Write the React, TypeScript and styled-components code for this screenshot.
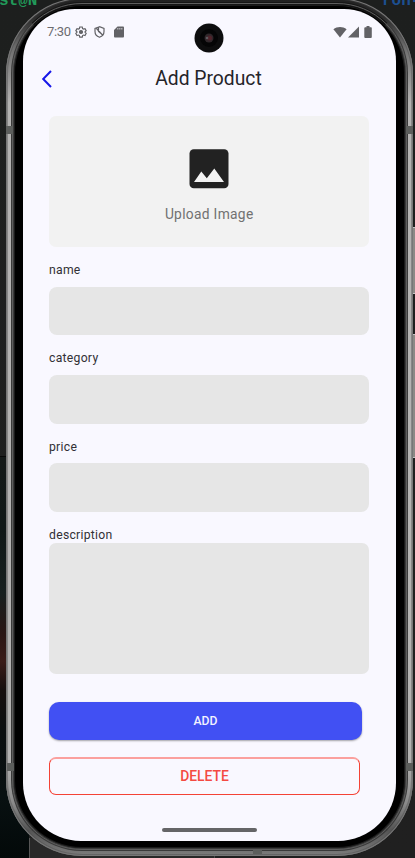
import React from 'react';
import styled, { createGlobalStyle } from 'styled-components';

const GlobalStyle = createGlobalStyle`
  *, *::before, *::after { box-sizing: border-box; }
  body { margin: 0; background: #1d1f1e; font-family: Roboto, sans-serif; }
  button, input, textarea { font-family: inherit; }
`;

const Desktop = styled.div`
  position: relative;
  width: 415px;
  height: 858px;
  overflow: hidden;
  padding-left: 6px;
  background: linear-gradient(#1d1f1e, #202020);
`;

const TerminalText = styled.span<{ $x: number; $color: string }>`
  position: absolute;
  top: -8px;
  left: ${p => p.$x}px;
  font: bold 16px/18px 'Liberation Mono', monospace;
  white-space: pre;
  color: ${p => p.$color};
`;

const Wallpaper = styled.div`
  position: absolute;
  left: 0;
  top: 456px;
  width: 29px;
  height: 402px;
  border-top: 1px solid #070707;
  background: linear-gradient(#141918 0, #101817 18%, #17201f 34%, #2a1614 44%, #3a1b17 51%, #160f0e 58%, #0b0f10 68%, #081011 85%, #030909 100%);
`;

const Taskbar = styled.div`
  position: absolute;
  left: 29px;
  top: 838px;
  width: 186px;
  height: 20px;
  border-left: 1px solid #565656;
  border-right: 1px solid #484848;
  background: #282828;
`;

const SideButton = styled.div<{ $y: number; $h: number }>`
  position: absolute;
  left: 411px;
  top: ${p => p.$y}px;
  width: 6px;
  height: ${p => p.$h}px;
  border: 1px solid #c4c4c4;
  border-radius: 2px;
  background: #8b8985;
`;

const Phone = styled.div`
  position: relative;
  width: 407px;
  height: 858px;
  margin-top: -2px;
  padding: 4px 5px 5px;
  border-radius: 76px;
  background: linear-gradient(#202020 0, #2c2c2c 20px, #6e6e6e 50px, #b3b2b1 105px, #b3b2b1 760px, #8a8a8a 805px, #555 832px, #7c7c7c 100%);
  box-shadow: inset 0 0 0 1px #777, inset 0 0 0 2px rgba(70, 70, 70, 0.4);
`;

const Bezel = styled.div`
  height: 849px;
  padding: 4px 9px 11px 9px;
  border: 3px solid #3a3a3a;
  border-top-color: #161616;
  border-radius: 71px;
  background: #000;
  box-shadow: inset 0 0 0 1px #1b1b1b;
  outline: 1px solid #5e5e5e;
  outline-offset: -2px;
`;

const AntennaBand = styled.div<{ $x: number; $y: number; $w: number; $h: number }>`
  position: absolute;
  left: ${p => p.$x}px;
  top: ${p => p.$y}px;
  width: ${p => p.$w}px;
  height: ${p => p.$h}px;
  background: #5c5e5c;
`;

const Screen = styled.main`
  position: relative;
  width: 373px;
  height: 832px;
  overflow: hidden;
  border-radius: 52px 52px 58px 58px;
  background: #f9f8ff;
  display: flex;
  flex-direction: column;
`;

const StatusBar = styled.div`
  height: 45px;
  flex: none;
  display: flex;
  align-items: center;
  padding: 0 24px 0 24px;
  color: #626266;
`;

const Clock = styled.span`
  width: 28px;
  font-size: 13px;
  line-height: 16px;
  letter-spacing: -0.3px;
  color: #6c6c70;
`;

const StatusGlyph = styled.svg<{ $gap?: number }>`
  flex: none;
  display: block;
  margin-left: ${p => p.$gap ?? 0}px;
`;

const Spacer = styled.span`
  flex: 1;
`;

const Camera = styled.svg`
  position: absolute;
  left: 171px;
  top: 14px;
`;

const AppBar = styled.header`
  height: 48px;
  flex: none;
  display: grid;
  grid-template-columns: 48px 1fr 50px;
  align-items: center;
`;

const BackButton = styled.button`
  display: flex;
  width: 48px;
  height: 48px;
  padding: 16px 0 0 18px;
  border: 0;
  background: none;
`;

const Title = styled.h1`
  margin: 2px 0 0;
  text-align: center;
  font-size: 19.3px;
  line-height: 24px;
  font-weight: 400;
  color: #25242a;
`;

const Form = styled.form`
  display: flex;
  flex-direction: column;
  padding: 14px 26.6px 0 26px;
`;

const Upload = styled.div`
  height: 131px;
  display: flex;
  flex-direction: column;
  align-items: center;
  padding-top: 33px;
  border-radius: 7px;
  background: #f2f2f2;
`;

const UploadLabel = styled.span`
  margin-top: 15px;
  font-size: 13.8px;
  line-height: 20px;
  letter-spacing: 0.3px;
  color: #717171;
`;

const Label = styled.label<{ $tight?: boolean }>`
  display: flex;
  flex-direction: column;
  padding-top: 15px;
  gap: ${p => (p.$tight ? 0 : 8.3)}px;
  font-size: 12.2px;
  line-height: 16.5px;
  letter-spacing: 0.27px;
  color: #323136;
`;

const Input = styled.input`
  width: 100%;
  height: 48.5px;
  padding: 0 12px;
  border: 0;
  border-radius: 8px;
  background: #e6e6e6;
`;

const TextArea = styled.textarea`
  display: block;
  width: 100%;
  height: 131px;
  margin-top: -0.5px;
  padding: 12px;
  border: 0;
  border-radius: 7px;
  background: #e6e6e6;
  resize: none;
`;

const AddButton = styled.button`
  width: 313px;
  height: 38px;
  margin-top: 28px;
  padding: 0;
  border: 0;
  border-radius: 10px;
  background: #4150f3;
  box-shadow: 0 1px 2px rgba(0, 0, 0, 0.35);
  font-size: 12.2px;
  font-weight: 500;
  color: #f2f2ff;
`;

const DeleteButton = styled.button`
  width: 311px;
  height: 38px;
  margin-top: 17px;
  padding: 0;
  border: 1px solid #f44336;
  border-top: 2px solid #fba09e;
  border-radius: 7px;
  background: transparent;
  font-size: 13.9px;
  line-height: 16px;
  font-weight: 500;
  color: #f44a42;
`;

const HomeIndicator = styled.div`
  width: 95px;
  height: 4px;
  margin: auto auto 9px 139px;
  border-radius: 2px;
  background: #656567;
`;

const fields = ['name', 'category', 'price'];

export default function App() {
  return (
    <>
      <GlobalStyle />
      <Desktop>
        <TerminalText $x={-1} $color="#219a59">st@N</TerminalText>
        <TerminalText $x={382} $color="#1c4f91">ron-</TerminalText>
        <Wallpaper />
        <Taskbar />
        <SideButton $y={227} $h={67} />
        <SideButton $y={334} $h={124} />
        <Phone>
          <AntennaBand $x={0} $y={128} $w={7} $h={8} />
          <AntennaBand $x={400} $y={128} $w={7} $h={8} />
          <AntennaBand $x={1} $y={765} $w={7} $h={8} />
          <AntennaBand $x={400} $y={765} $w={7} $h={8} />
          <Bezel>
            <Screen>
              <StatusBar>
                <Clock>7:30</Clock>
                <StatusGlyph width="12" height="12" viewBox="0 0 24 24" fill="none" stroke="currentColor" strokeWidth="2.4">
                  <path d="M9.500 2h5l.7 3.100 1.800 1 3-.9 2.300 4.100-2.200 2.200v1.200l2.200 2.200-2.300 4.100-3-.9-1.800 1-.7 3h-5l-.7-3-1.800-1-3 .9-2.300-4.100 2.200-2.200v-1.200L1.700 9.300 4 5.200l3 .9 1.800-1z" />
                  <circle cx="12" cy="12" r="3" fill="currentColor" />
                </StatusGlyph>
                <StatusGlyph $gap={7} width="11" height="12" viewBox="0 0 22 24" fill="none" stroke="currentColor" strokeWidth="2.4">
                  <path d="M11 1.500 2 5v6c0 5.500 3.800 9.800 9 11.500 5.200-1.700 9-6 9-11.500V5zM5 5l12 13M9 3v8l5 4" />
                </StatusGlyph>
                <StatusGlyph $gap={9} width="10" height="12" viewBox="0 0 20 24" fill="currentColor">
                  <path fillRule="evenodd" d="M7 1h11c1 0 2 1 2 2v18c0 1-1 2-2 2H2c-1 0-2-1-2-2V8zM7 4v3h1.500V4zm4 0v3h1.500V4zm4 0v3h1.500V4z" />
                </StatusGlyph>
                <Spacer />
                <StatusGlyph width="14" height="12" viewBox="0 0 14 12" fill="currentColor">
                  <path d="M.4 3.300C4.200.1 9.800.1 13.600 3.300L7 11.600z" />
                </StatusGlyph>
                <StatusGlyph $gap={1} width="11" height="12" viewBox="0 0 11 12" fill="currentColor">
                  <path d="M11 .6V11.500H0z" />
                </StatusGlyph>
                <StatusGlyph $gap={5} width="8" height="12" viewBox="0 0 8 12" fill="currentColor">
                  <path d="M2.500 0h3v1.200H7c.4 0 .8.300.8.800v9c0 .5-.4.9-.8.900H1.200c-.5 0-.9-.4-.9-.9V2c0-.5.4-.8.900-.8h1.300z" />
                </StatusGlyph>
              </StatusBar>
              <Camera width="30" height="30" viewBox="0 0 30 30">
                <circle cx="15" cy="15" r="14.500" fill="#0d0d0e" />
                <circle cx="15" cy="15" r="9" fill="#050506" />
                <circle cx="15" cy="15" r="4.500" fill="#30272b" />
                <circle cx="15.500" cy="15" r="2.500" fill="#50232b" />
                <circle cx="13" cy="15" r="1.300" fill="#5d5a5e" />
              </Camera>
              <AppBar>
                <BackButton type="button" aria-label="Back">
                  <svg width="12" height="18" viewBox="0 0 12 18" fill="none" stroke="#1717e8" strokeWidth="2">
                    <path d="M10 1 2.200 9l7.800 8" />
                  </svg>
                </BackButton>
                <Title>Add Product</Title>
              </AppBar>
              <Form>
                <Upload>
                  <svg width="40" height="40" viewBox="0 0 40 40">
                    <rect x=".5" y=".3" width="39" height="39" rx="4.300" fill="#222" />
                    <path d="m5 33 7.300-10.500 5.500 6.700L25.300 19.500 35 33z" fill="#f2f2f2" />
                  </svg>
                  <UploadLabel>Upload Image</UploadLabel>
                </Upload>
                {fields.map(field => (
                  <Label key={field}>
                    {field}
                    <Input name={field} />
                  </Label>
                ))}
                <Label $tight>
                  description
                  <TextArea name="description" />
                </Label>
                <AddButton type="button">ADD</AddButton>
                <DeleteButton type="button">DELETE</DeleteButton>
              </Form>
              <HomeIndicator />
            </Screen>
          </Bezel>
          <AntennaBand $x={247} $y={852} $w={9} $h={4} />
        </Phone>
      </Desktop>
    </>
  );
}
